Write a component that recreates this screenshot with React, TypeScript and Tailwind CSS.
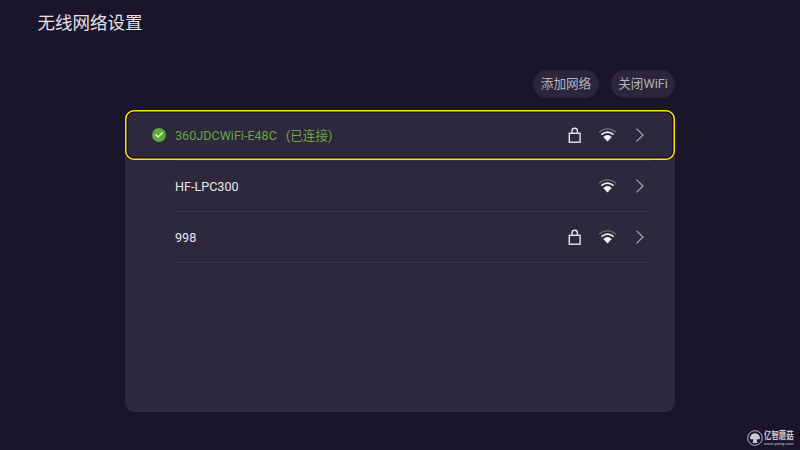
import { useState } from 'react';

interface Network {
  ssid: string;
  locked: boolean;
  connected?: boolean;
}

const networks: Network[] = [
  { ssid: '360JDCWiFi-E48C', locked: true, connected: true },
  { ssid: 'HF-LPC300', locked: false },
  { ssid: '998', locked: true },
];

function CheckBadge() {
  return (
    <svg className="w-3.5 h-3.5" viewBox="0 0 14 14" fill="none">
      <circle cx="7" cy="7" r="6.9" fill="#5fa83c" />
      <path d="M3.5 6.5L6.1 8.9L10.6 4.5" stroke="#f2f5f0" strokeWidth="1.4" />
    </svg>
  );
}

function LockIcon() {
  return (
    <svg className="w-[13px] h-[17px]" viewBox="0 0 13 17" fill="none" stroke="#e6e4ea" strokeWidth="1.4">
      <rect x="1.3" y="6.3" width="10.8" height="8.9" />
      <path d="M4 6.3V3.9a2.7 2.7 0 0 1 5.4 0V6.3" />
    </svg>
  );
}

function WifiIcon() {
  return (
    <svg className="w-[19px] h-4" viewBox="0 0 19 16" fill="none">
      <path d="M1 5.2Q9.5 -1.7 18 5.2" stroke="#69657a" strokeWidth="1.5" />
      <path d="M3.4 7.7Q9.5 2.7 15.6 7.7" stroke="#eeecf1" strokeWidth="1.6" />
      <path d="M5.6 9.9Q9.5 6.7 13.4 9.9L9.5 14.2Z" fill="#f4f3f6" stroke="#f4f3f6" strokeWidth="0.6" />
    </svg>
  );
}

function Chevron() {
  return (
    <svg className="w-2 h-3.5" viewBox="0 0 8 14" fill="none">
      <path d="M0.5 0.6L7 7L0.5 13.4" stroke="#a8a5af" strokeWidth="1.3" />
    </svg>
  );
}

function Watermark() {
  return (
    <div className="flex items-center gap-px text-[#c9c7cf]">
      <svg className="w-4 h-4 shrink-0" viewBox="0 0 16 16" fill="none">
        <circle cx="8" cy="8" r="7.3" stroke="currentColor" strokeWidth="0.9" />
        <path
          d="M2.9 8.6C3 5.3 5.2 3.2 8 3.2s5 2.1 5.1 5.4c-.8.8-2.2 1-3.4.7.1 1.3.5 2.5.8 3.6H5.5c.3-1.1.7-2.3.8-3.6-1.2.3-2.6.1-3.4-.7Z"
          fill="currentColor"
        />
      </svg>
      <div className="w-[30px] h-[15px] flex flex-col whitespace-nowrap">
        <div className="w-10 h-[10px] text-[10px] leading-[10px] font-bold origin-left scale-x-[0.74]">亿智蘑菇</div>
        <div className="h-[5px] text-[4.2px] leading-[5px]">www.yzmg.com</div>
      </div>
    </div>
  );
}

export default function App() {
  const [focused, setFocused] = useState(0);

  return (
    <div className="w-[800px] h-[450px] overflow-hidden bg-[#1b152b] flex flex-col font-[Roboto,'Noto_Sans_CJK_SC',sans-serif]">
      <h1 className="h-[46px] pl-[37.5px] text-[17.5px] leading-[46px] text-[#e4e2e8]">无线网络设置</h1>

      <div className="w-[550px] mx-auto mt-6 flex justify-end gap-3">
        <button className="w-[66px] h-[27.5px] rounded-full bg-[#2b263b] text-[12.6px] leading-7 text-[#b5b2bc]">
          添加网络
        </button>
        <button className="w-16 h-[27.5px] rounded-full bg-[#2b263b] text-[12.6px] leading-7 text-[#b5b2bc]">
          关闭WiFi
        </button>
      </div>

      {/* Network list */}
      <div className="w-[550px] h-[302px] mx-auto mt-[12.5px] rounded-[9px] bg-[#2d283c]">
        {networks.map((net, i) => (
          <div
            key={net.ssid}
            onFocus={() => setFocused(i)}
            tabIndex={0}
            className="relative outline-none h-[51px] pl-[27px] pr-6 flex"
          >
            {/* focus ring, drawn over the row */}
            {focused === i && (
              <svg className="absolute left-0 top-0 w-[550px] h-[50px] pointer-events-none" fill="none">
                <rect x="2" y="2" width="546" height="46" rx="7.2" stroke="#14101f" strokeWidth="1.6" />
                <rect x="0.75" y="0.75" width="548.5" height="48.5" rx="8.3" stroke="#fae600" strokeWidth="1.5" />
              </svg>
            )}
            <div className="w-[23px] h-[50px] shrink-0 flex items-center">{net.connected && <CheckBadge />}</div>
            <div
              className={`flex-1 flex items-center text-[12.6px] border-b border-[#3a3548] ${
                net.connected ? 'text-[#67a644]' : 'text-[#e8e6ec]'
              }`}
            >
              <span className="pt-0.5">{net.ssid}</span>
              {net.connected && <span className="pt-0.5 ml-[9px]">(已连接)</span>}
              <div className="ml-auto flex items-center pr-[7px]">
                {net.locked && <LockIcon />}
                <div className="ml-[17px] mr-[19px]">
                  <WifiIcon />
                </div>
                <Chevron />
              </div>
            </div>
          </div>
        ))}
      </div>

      <div className="mt-[18px] pr-[6px] flex justify-end">
        <Watermark />
      </div>
    </div>
  );
}
